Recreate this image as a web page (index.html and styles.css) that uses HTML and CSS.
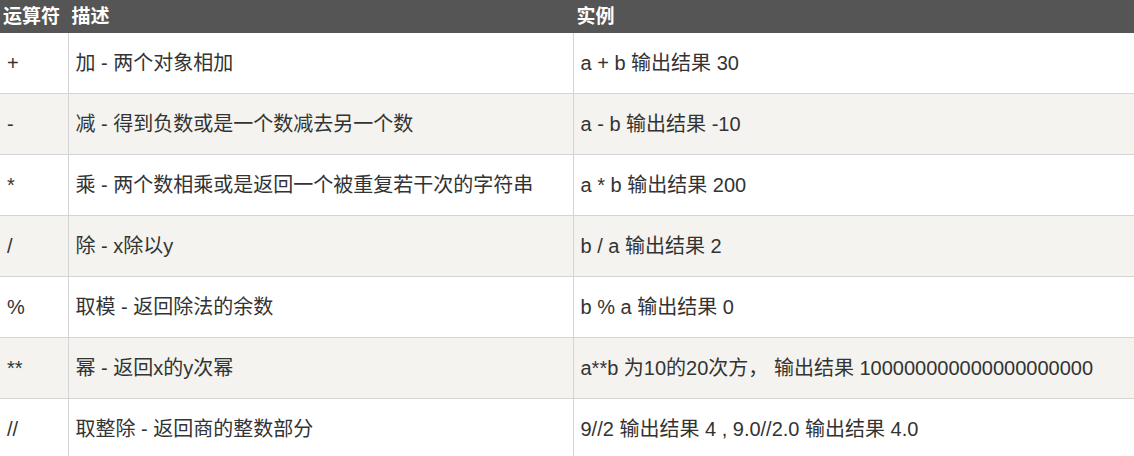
FILE: index.html
```html
<!DOCTYPE html>
<html lang="zh">
<head>
<meta charset="utf-8">
<link rel="stylesheet" href="styles.css">
</head>
<body>
<table class="reference">
  <colgroup>
    <col class="c1">
    <col class="c2">
    <col class="c3">
  </colgroup>
  <thead>
    <tr><th>运算符</th><th>描述</th><th>实例</th></tr>
  </thead>
  <tbody>
    <tr><td>+</td><td>加 - 两个对象相加</td><td>a + b 输出结果 30</td></tr>
    <tr><td>-</td><td>减 - 得到负数或是一个数减去另一个数</td><td>a - b 输出结果 -10</td></tr>
    <tr><td>*</td><td>乘 - 两个数相乘或是返回一个被重复若干次的字符串</td><td>a * b 输出结果 200</td></tr>
    <tr><td>/</td><td>除 - x除以y</td><td>b / a 输出结果 2</td></tr>
    <tr><td>%</td><td>取模 - 返回除法的余数</td><td>b % a 输出结果 0</td></tr>
    <tr><td>**</td><td>幂 - 返回x的y次幂</td><td>a**b 为10的20次方， 输出结果 100000000000000000000</td></tr>
    <tr><td>//</td><td>取整除 - 返回商的整数部分</td><td>9//2 输出结果 4 , 9.0//2.0 输出结果 4.0</td></tr>
  </tbody>
</table>
</body>
</html>
```

FILE: styles.css
```css
html, body {
  margin: 0;
  padding: 0;
  background: #fff;
  overflow: hidden;
}

.reference {
  border-collapse: collapse;
  table-layout: fixed;
  width: 1134px;
  font-family: "Liberation Sans", "Noto Sans CJK SC", sans-serif;
  color: #333;
}

.c1 { width: 68px; }
.c2 { width: 505px; }

.reference th {
  background: #555;
  color: #fff;
  border: 1px solid #555;
  font-size: 19px;
  font-weight: bold;
  line-height: 25px;
  padding: 3px;
  text-align: left;
  vertical-align: top;
}

.reference td {
  border: 1px solid #d4d4d4;
  font-size: 20px;
  line-height: 40px;
  padding: 10px 6px 10px 7px;
  vertical-align: top;
  white-space: nowrap;
}

.reference th:first-child,
.reference td:first-child {
  border-left: none;
}

.reference th:last-child,
.reference td:last-child {
  border-right: none;
}

.reference tbody tr:nth-child(even) {
  background: #f4f3ef;
}
```
